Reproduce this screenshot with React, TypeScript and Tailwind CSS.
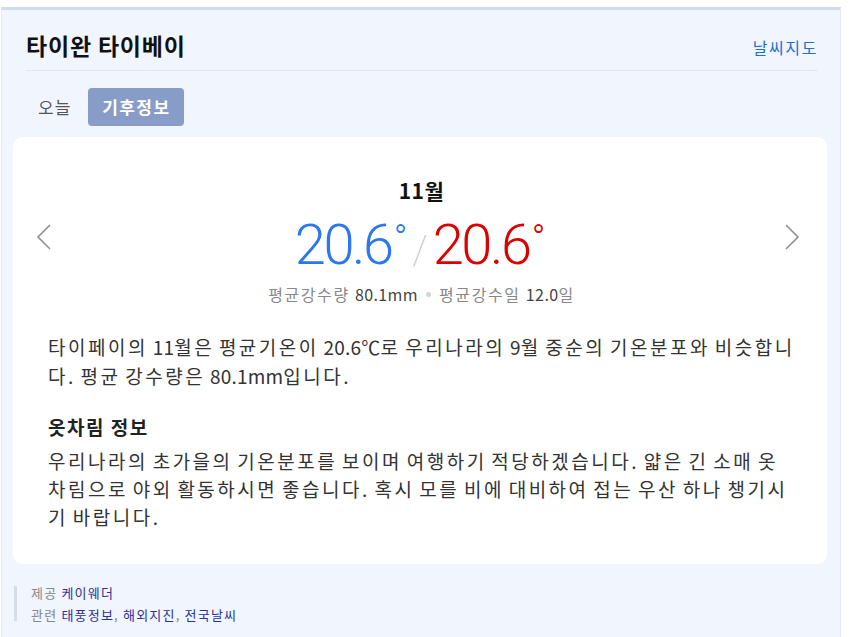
import React from 'react';

const font = { fontFamily: '"Noto Sans CJK KR", "Noto Sans", sans-serif' };

function Chevron({ dir }: { dir: 'left' | 'right' }) {
  return (
    <svg width="16" height="26" viewBox="0 0 16 26" fill="none" className="shrink-0 mb-[16px]">
      <path
        d={dir === 'left' ? 'M14 1 L2 13 L14 25' : 'M2 1 L14 13 L2 25'}
        stroke="#8a8f99"
        strokeWidth="1.6"
      />
    </svg>
  );
}

function Temp({ value, color }: { value: string; color: string }) {
  return (
    <span className={`flex items-start ${color}`}>
      <span className="text-[56px] font-light tracking-[-2.4px]">{value}</span>
      <span className="text-[36px] font-light mt-[4px] ml-[2px]">°</span>
    </span>
  );
}

const N = ({ children }: { children: React.ReactNode }) => (
  <span className="tracking-[0.2px]">{children}</span>
);

export default function App() {
  return (
    <div className="w-[849px] h-[637px] bg-white pt-[7px]" style={font}>
      <div className="ml-[1px] w-[840px] h-[630px] bg-[#f1f5fd] border-t-[3px] border-[#d2dbee] border-x border-x-[#e6ebf4]">
        {/* header */}
        <div className="ml-[24px] mr-[22px] flex items-end justify-between h-[61px] pb-[10px] border-b border-[#e3e7ee]">
          <h2 className="text-[23px] font-bold text-[#111] leading-[30px] tracking-[0.8px]">타이완 타이베이</h2>
          <a className="text-[16px] text-[#1f6fd0] tracking-[1.6px] leading-[26px]">날씨지도</a>
        </div>

        {/* tabs */}
        <div className="flex items-center gap-[17px] pl-[36px] mt-[17px] h-[38px]">
          <span className="text-[17px] text-[#555] tracking-[1px]">오늘</span>
          <span className="h-[38px] px-[14px] rounded-[4px] bg-[#879dc8] text-white text-[17px] font-bold tracking-[1.4px] flex items-center">
            기후정보
          </span>
        </div>

        {/* card */}
        <div className="ml-[11px] w-[814px] mt-[11px] bg-white rounded-[10px] h-[427px] pl-[35px] pr-[32px] pt-[38px]">
          <div className="text-center text-[21px] font-bold text-[#111] leading-[30px] tracking-[0.5px]">11월</div>
          <div className="flex items-center justify-between -ml-[12px] -mr-[5px] mt-[12px]">
            <Chevron dir="left" />
            <div className="flex items-start leading-none ml-[4px]" style={{ fontFamily: 'Roboto, "Noto Sans", sans-serif' }}>
              <Temp value="20.6" color="text-[#2a77f0]" />
              <span className="text-[40px] font-thin text-[#c4c4c4] mx-[5px] mt-[14px]">/</span>
              <Temp value="20.6" color="text-[#dc0000]" />
            </div>
            <Chevron dir="right" />
          </div>
          <div className="text-center text-[16px] mt-[9px] flex items-center justify-center gap-[8px] leading-[24px]">
            <span className="text-[#888] tracking-[1.6px]">평균강수량 <span className="text-[#444] tracking-[0.4px]">80.1mm</span></span>
            <span className="w-[5px] h-[5px] rounded-full bg-[#d3d3d3]" />
            <span className="text-[#888] tracking-[1.6px]">평균강수일 <span className="text-[#444] tracking-[0.4px]">12.0</span>일</span>
          </div>

          <p className="mt-[26px] text-[19px] leading-[29px] text-[#333] tracking-[2.5px] [word-spacing:-2px]">
            타이페이의 <N>11</N>월은 평균기온이 <N>20.6℃</N>로 우리나라의 <N>9</N>월 중순의 기온분포와 비슷합니다. 평균 강수량은 <N>80.1mm</N>입니다.
          </p>
          <h3 className="mt-[22px] text-[19px] font-bold text-[#222] leading-[29px] tracking-[1.5px]">옷차림 정보</h3>
          <p className="mt-[6px] mr-[6px] text-[19px] leading-[28px] text-[#333] tracking-[2.5px] [word-spacing:-2px]">
            우리나라의 초가을의 기온분포를 보이며 여행하기 적당하겠습니다. 얇은 긴 소매 옷차림으로 야외 활동하시면 좋습니다. 혹시 모를 비에 대비하여 접는 우산 하나 챙기시기 바랍니다.
          </p>
        </div>

        {/* footer */}
        <div className="ml-[12px] mt-[22px] h-[35px] border-l-[3px] border-[#d7dde8] pl-[14px] text-[13px] leading-[22px] text-[#888] tracking-[1.2px] flex flex-col justify-center">
          <div>
            제공 <a className="text-[#2c2f9c]">케이웨더</a>
          </div>
          <div>
            관련 <a className="text-[#2c2f9c]">태풍정보</a>, <a className="text-[#2c2f9c]">해외지진</a>,{' '}
            <a className="text-[#2c2f9c]">전국날씨</a>
          </div>
        </div>
      </div>
    </div>
  );
}
